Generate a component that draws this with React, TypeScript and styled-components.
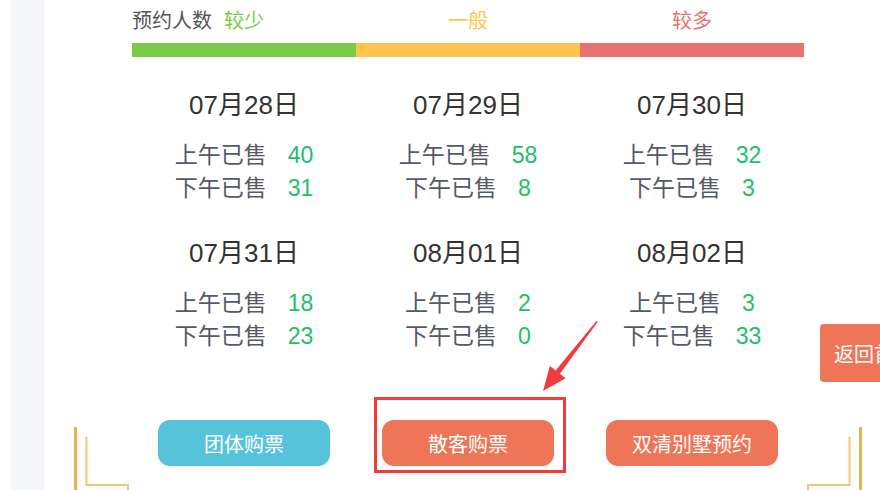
import React from "react";
import styled, { createGlobalStyle } from "styled-components";

const GlobalStyle = createGlobalStyle`
  html, body { margin: 0; padding: 0; background: #fff; overflow: hidden; }
  body { font-family: "Liberation Sans", "Noto Sans CJK SC", sans-serif; }
`;

const Page = styled.div`
  position: relative;
  display: flex;
  width: 880px;
  height: 490px;
  overflow: hidden;
  background: #fff;
`;

const Gutter = styled.div`
  width: 11px;
  flex: none;
`;

const Sidebar = styled.div`
  width: 33px;
  flex: none;
  background: #f5f6f8;
  border-right: 1px solid #eef0f3;
  box-sizing: border-box;
`;

const Main = styled.main`
  padding-left: 88px;
  width: 672px;
  flex: none;
`;

const Legend = styled.div`
  display: grid;
  grid-template-columns: repeat(3, 224px);
  margin-top: 6px;
  font-size: 20px;
  line-height: 30px;
`;

const LegendCell = styled.div<{ $align: "start" | "center" }>`
  display: flex;
  justify-content: ${(p) => (p.$align === "start" ? "flex-start" : "center")};
  gap: 12px;
`;

const LegendLabel = styled.span`
  color: #555;
`;

const LegendLevel = styled.span<{ $color: string }>`
  color: ${(p) => p.$color};
`;

const Bar = styled.div`
  display: flex;
  height: 14px;
  margin-top: 7px;
`;

const Segment = styled.div<{ $color: string }>`
  width: 224px;
  background: ${(p) => p.$color};
`;

const DayGrid = styled.div`
  display: grid;
  grid-template-columns: repeat(3, 224px);
`;

const DayBlock = styled.div`
  padding-top: 30px;
  text-align: center;
`;

const DayTitle = styled.div`
  font-size: 26px;
  line-height: 36px;
  color: #333;
  margin-bottom: 16px;
`;

const SaleLine = styled.div`
  display: flex;
  justify-content: center;
  gap: 21px;
  font-size: 23px;
  line-height: 33px;
  color: #555a66;
`;

const SaleCount = styled.span`
  color: #1dbf6b;
`;

const ButtonRow = styled.div`
  display: grid;
  grid-template-columns: repeat(3, 224px);
  justify-items: center;
  margin-top: 67px;
`;

const ActionButton = styled.button<{ $color: string }>`
  width: 172px;
  height: 46px;
  border: none;
  border-radius: 12px;
  background: ${(p) => p.$color};
  color: #fff;
  font-family: "Liberation Sans", "Noto Sans CJK SC", sans-serif;
  font-size: 20px;
  padding: 0;
  cursor: pointer;
`;

const BackButton = styled.button`
  position: absolute;
  left: 820px;
  top: 324px;
  height: 58px;
  padding: 0 14px;
  border: none;
  border-radius: 4px;
  background: #ee7558;
  color: #fff;
  font-family: "Liberation Sans", "Noto Sans CJK SC", sans-serif;
  font-size: 20px;
  white-space: nowrap;
`;

const Highlight = styled.div`
  position: absolute;
  left: 374px;
  top: 397px;
  width: 192px;
  height: 76px;
  border: 3px solid #f23b3b;
  box-sizing: border-box;
  pointer-events: none;
`;

const ArrowSvg = styled.svg`
  position: absolute;
  left: 530px;
  top: 310px;
  width: 80px;
  height: 90px;
  pointer-events: none;
`;

const CornerSvg = styled.svg<{ $side: "left" | "right" }>`
  position: absolute;
  top: 425px;
  left: ${(p) => (p.$side === "left" ? "70px" : "804px")};
  width: 62px;
  height: 65px;
  transform: ${(p) => (p.$side === "left" ? "none" : "scaleX(-1)")};
  pointer-events: none;
`;

const days = [
  { date: "07月28日", am: 40, pm: 31 },
  { date: "07月29日", am: 58, pm: 8 },
  { date: "07月30日", am: 32, pm: 3 },
  { date: "07月31日", am: 18, pm: 23 },
  { date: "08月01日", am: 2, pm: 0 },
  { date: "08月02日", am: 3, pm: 33 },
];

const Corner: React.FC<{ side: "left" | "right" }> = ({ side }) => (
  <CornerSvg $side={side} viewBox="0 0 62 65">
    <rect x="4" y="2" width="3" height="63" fill="#e8b24c" />
    <path d="M16.5 12 V60 H58 V65" fill="none" stroke="#f1c777" strokeWidth="2" />
  </CornerSvg>
);

export default function App() {
  return (
    <>
      <GlobalStyle />
      <Page>
        <Gutter />
        <Sidebar />
        <Main>
          <Legend>
            <LegendCell $align="start">
              <LegendLabel>预约人数</LegendLabel>
              <LegendLevel $color="#7acc48">较少</LegendLevel>
            </LegendCell>
            <LegendCell $align="center">
              <LegendLevel $color="#fdc54e">一般</LegendLevel>
            </LegendCell>
            <LegendCell $align="center">
              <LegendLevel $color="#e87272">较多</LegendLevel>
            </LegendCell>
          </Legend>
          <Bar>
            <Segment $color="#7acc48" />
            <Segment $color="#fdc54e" />
            <Segment $color="#e87272" />
          </Bar>
          <DayGrid>
            {days.map((d) => (
              <DayBlock key={d.date}>
                <DayTitle>{d.date}</DayTitle>
                <SaleLine>
                  <span>上午已售</span>
                  <SaleCount>{d.am}</SaleCount>
                </SaleLine>
                <SaleLine>
                  <span>下午已售</span>
                  <SaleCount>{d.pm}</SaleCount>
                </SaleLine>
              </DayBlock>
            ))}
          </DayGrid>
          <ButtonRow>
            <ActionButton $color="#56c3da">团体购票</ActionButton>
            <ActionButton $color="#ee7558">散客购票</ActionButton>
            <ActionButton $color="#ee7558">双清别墅预约</ActionButton>
          </ButtonRow>
        </Main>
        <Corner side="left" />
        <Corner side="right" />
        <Highlight />
        <ArrowSvg viewBox="0 0 80 90">
          <polygon
            points="66.6,10.7 67.8,11.8 30,63.8 35.7,68.3 13,81 19.9,55.9 25.6,60.4"
            fill="#f23b3b"
          />
        </ArrowSvg>
        <BackButton>返回首页</BackButton>
      </Page>
    </>
  );
}
